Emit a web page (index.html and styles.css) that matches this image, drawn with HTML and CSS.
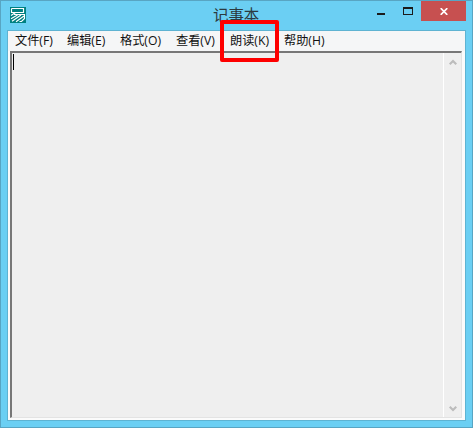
FILE: index.html
```html
<!DOCTYPE html>
<html lang="zh-CN">
<head>
<meta charset="utf-8">
<title>记事本</title>
<link rel="stylesheet" href="styles.css">
</head>
<body>
<div class="window">
  <header class="titlebar">
    <svg class="app-icon" width="16" height="16" viewBox="0 0 16 16">
      <rect width="16" height="16" fill="#008080"/>
      <path fill="none" stroke="#fff" stroke-width="1.15" d="M1.5 1.5H13.5V5.5H1.5V1.5M5.5 5.5L1 8.5M4 7.5H14.5V11.5L11.5 14.5H9.5M7.5 8L1 11.8M11 8L2 14.2M14 9L6 14.7"/>
    </svg>
    <h1 class="title">记事本</h1>
    <div class="controls">
      <span class="minimize"></span>
      <span class="maximize"></span>
      <span class="close">
        <svg width="8" height="7" viewBox="0 0 8 7"><path d="M.7 .2L7.3 6.8M7.3 .2L.7 6.8" stroke="#fff" stroke-width="1.7"/></svg>
      </span>
    </div>
  </header>
  <div class="client">
    <nav class="menubar">
      <span>文件(F)</span><span>编辑(E)</span><span>格式(O)</span><span>查看(V)</span><span class="marked">朗读(K)</span><span>帮助(H)</span>
    </nav>
    <main class="editor">
      <div class="text"><i class="caret"></i></div>
      <div class="scrollbar">
        <svg width="8" height="7" viewBox="0 0 8 7"><path d="M.7 5.3L4 2L7.3 5.3" fill="none" stroke="#bcbcbc" stroke-width="2.2"/></svg>
        <svg width="8" height="7" viewBox="0 0 8 7"><path d="M.7 1.7L4 5L7.3 1.7" fill="none" stroke="#bcbcbc" stroke-width="2.2"/></svg>
      </div>
    </main>
  </div>
</div>
</body>
</html>
```

FILE: styles.css
```css
*, *::after { box-sizing: border-box; }
body { margin: 0; font-family: "Open Sans", "Noto Sans CJK SC", sans-serif; }
.window {
  width: 473px;
  height: 428px;
  padding: 0 6px 6px;
  background: #6bcff3;
  border: 1px solid #58a5c3;
}
.titlebar {
  display: grid;
  grid-template-columns: 203px 1fr 98px;
  height: 29px;
}
.app-icon { margin: 6px 0 0 3px; }
.title {
  margin: 4px 0 0 3px;
  font-size: 15.4px;
  line-height: 22px;
  font-weight: 400;
  color: #2c3a40;
}
.controls { display: flex; align-items: flex-start; }
.minimize { width: 8px; height: 2px; margin: 12px 18px 0 9px; background: #1b1b1b; }
.maximize { width: 10px; height: 8px; margin: 6px 8px 0 0; border: 1px solid #1b1b1b; border-top-width: 2px; }
.close {
  display: flex;
  align-items: center;
  justify-content: center;
  width: 45px;
  height: 20px;
  padding-top: 1px;
  background: #c75050;
}
.client {
  height: 391px;
  padding: 0 1px 1px;
  border: 1px solid #5eb3d2;
  background: #fbfbfb;
}
.menubar {
  display: grid;
  grid-template-columns: 52px 53px 56px 54px 54px 1fr;
  height: 20px;
  margin: 0 -1px;
  padding-left: 7px;
  background: #f5f6f7;
  font-size: 12.2px;
  line-height: 19px;
  color: #111;
  white-space: nowrap;
}
.marked { position: relative; }
.marked::after {
  content: "";
  position: absolute;
  left: -10px;
  top: -11px;
  width: 59px;
  height: 42px;
  border: 4px solid #fe0000;
  border-radius: 2px;
}
.editor {
  display: flex;
  width: 452px;
  height: 367px;
  margin-left: 1px;
  background: #efefef;
  border: solid;
  border-width: 2px 1px 1px 2px;
  border-color: #777 #e3e3e3 #e3e3e3 #777;
}
.text { flex: 1; }
.caret { display: block; width: 1px; height: 16px; margin: 1px 0 0 1px; background: #000; }
.scrollbar {
  display: flex;
  flex-direction: column;
  align-items: center;
  justify-content: space-between;
  width: 18px;
  padding: 6px 0 5px;
  border-left: 1px solid #fff;
}
```
